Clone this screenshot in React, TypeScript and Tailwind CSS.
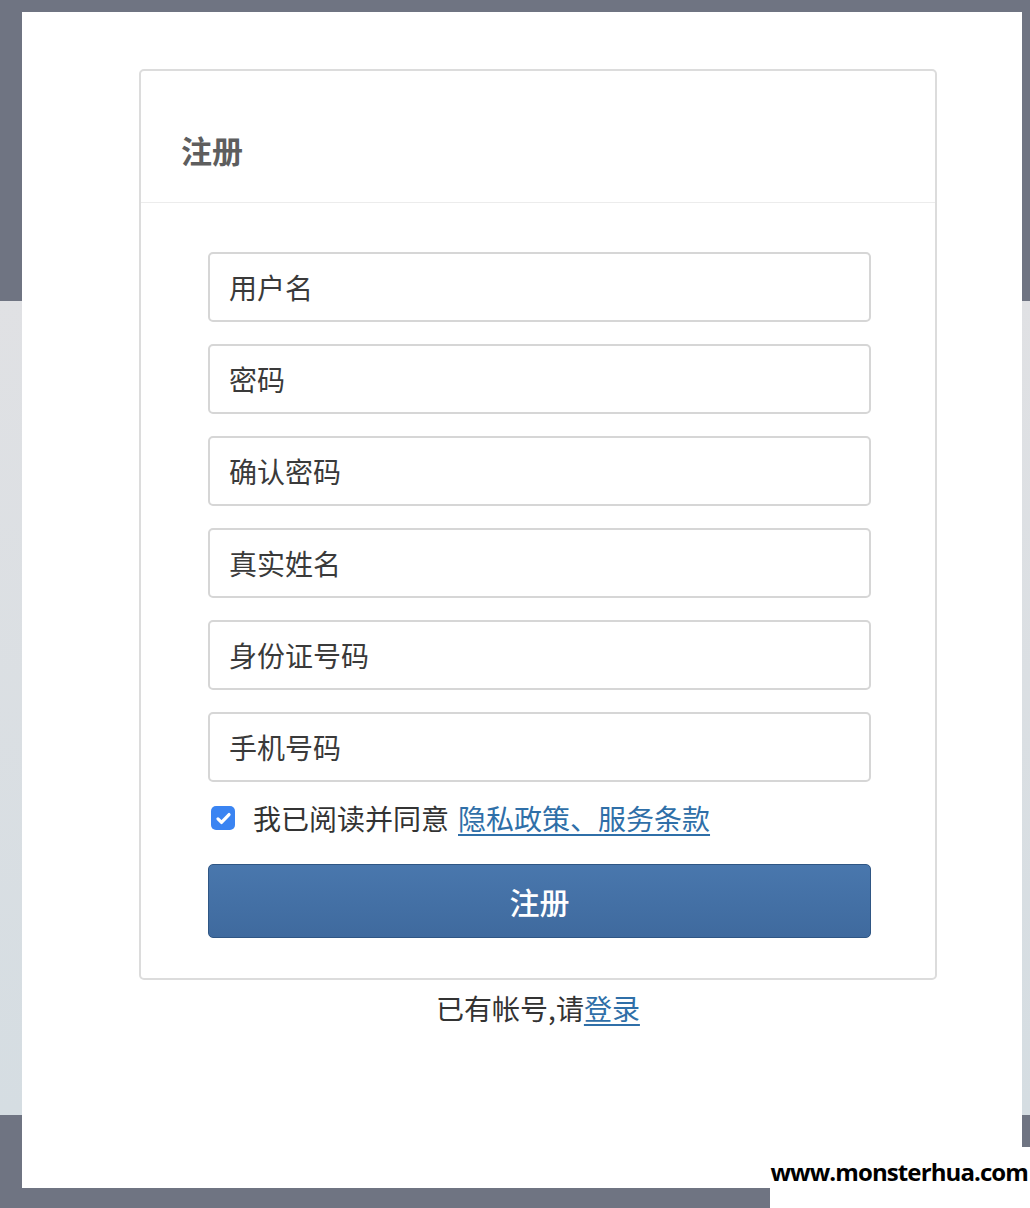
import React from 'react';

const fields = ['用户名', '密码', '确认密码', '真实姓名', '身份证号码', '手机号码'];

const cjk = { fontFamily: '"Noto Sans CJK SC", "Noto Sans", sans-serif' };

export default function App() {
  return (
    <div className="relative h-[1208px] w-[1030px] overflow-hidden bg-[#6f7482]" style={cjk}>
      {/* page behind the overlay */}
      <div className="h-[301px]" />
      <div className="h-[814px] bg-gradient-to-b from-[#e0e1e4] to-[#d5dde2]" />

      {/* modal */}
      <div className="absolute left-[22px] top-[12px] h-[1176px] w-[1000px] bg-white">
        <div className="ml-[117px] mt-[57px] w-[798px]">
          {/* card */}
          <div className="rounded-[5px] border-2 border-[#dcdcdc]">
            <div className="h-[132px] border-b border-[#ececec] pl-[40px] pt-[63px]">
              <h1 className="text-[31px] font-bold leading-none text-[#5e5e5e]">注册</h1>
            </div>
            <form className="flex flex-col pb-[40px] pl-[67px] pr-[64px] pt-[49px]">
              <div className="flex flex-col gap-[22px]">
                {fields.map((f) => (
                  <input
                    key={f}
                    type={f.includes('密码') ? 'password' : 'text'}
                    placeholder={f}
                    className="h-[70px] w-full rounded-[5px] border-2 border-[#d6d6d6] bg-white px-[19px] text-[28px] text-[#333] outline-none placeholder:text-[#3a3a3a]"
                  />
                ))}
              </div>
              <label className="mt-[22px] flex items-center text-[28px] leading-none text-[#333]">
                <span className="mx-[3px] flex h-[24px] w-[24px] items-center justify-center rounded-[5px] bg-[#3a84f2]">
                  <svg viewBox="0 0 24 24" className="h-[19px] w-[19px]" fill="none" stroke="white" strokeWidth="4" strokeLinecap="round" strokeLinejoin="round">
                    <path d="M5 12.5l4.5 4.5L19 7" />
                  </svg>
                </span>
                <span className="ml-[15px]">我已阅读并同意</span>
                <a href="#" className="ml-[9px] text-[#2f6fa8] underline underline-offset-[4px]">隐私政策、服务条款</a>
              </label>
              <button
                type="button"
                className="mt-[32px] h-[74px] w-full rounded-[5px] border border-[#2f5684] bg-gradient-to-b from-[#4977ad] to-[#3f6a9e] text-[30px] font-medium text-white"
              >
                注册
              </button>
            </form>
          </div>
          <p className="mt-[7px] text-center text-[28px] text-[#333]">
            已有帐号,请<a href="#" className="text-[#2f6fa8] underline underline-offset-[4px]">登录</a>
          </p>
        </div>
      </div>

      {/* watermark */}
      <div className="absolute bottom-0 right-0 flex h-[61px] w-[260px] justify-end bg-white pr-[2px] pt-[5px]">
        <span className="text-[24px] font-bold leading-[40px] tracking-[-0.9px] text-black" style={{ fontFamily: '"Open Sans", sans-serif' }}>
          www.monsterhua.com
        </span>
      </div>
    </div>
  );
}
